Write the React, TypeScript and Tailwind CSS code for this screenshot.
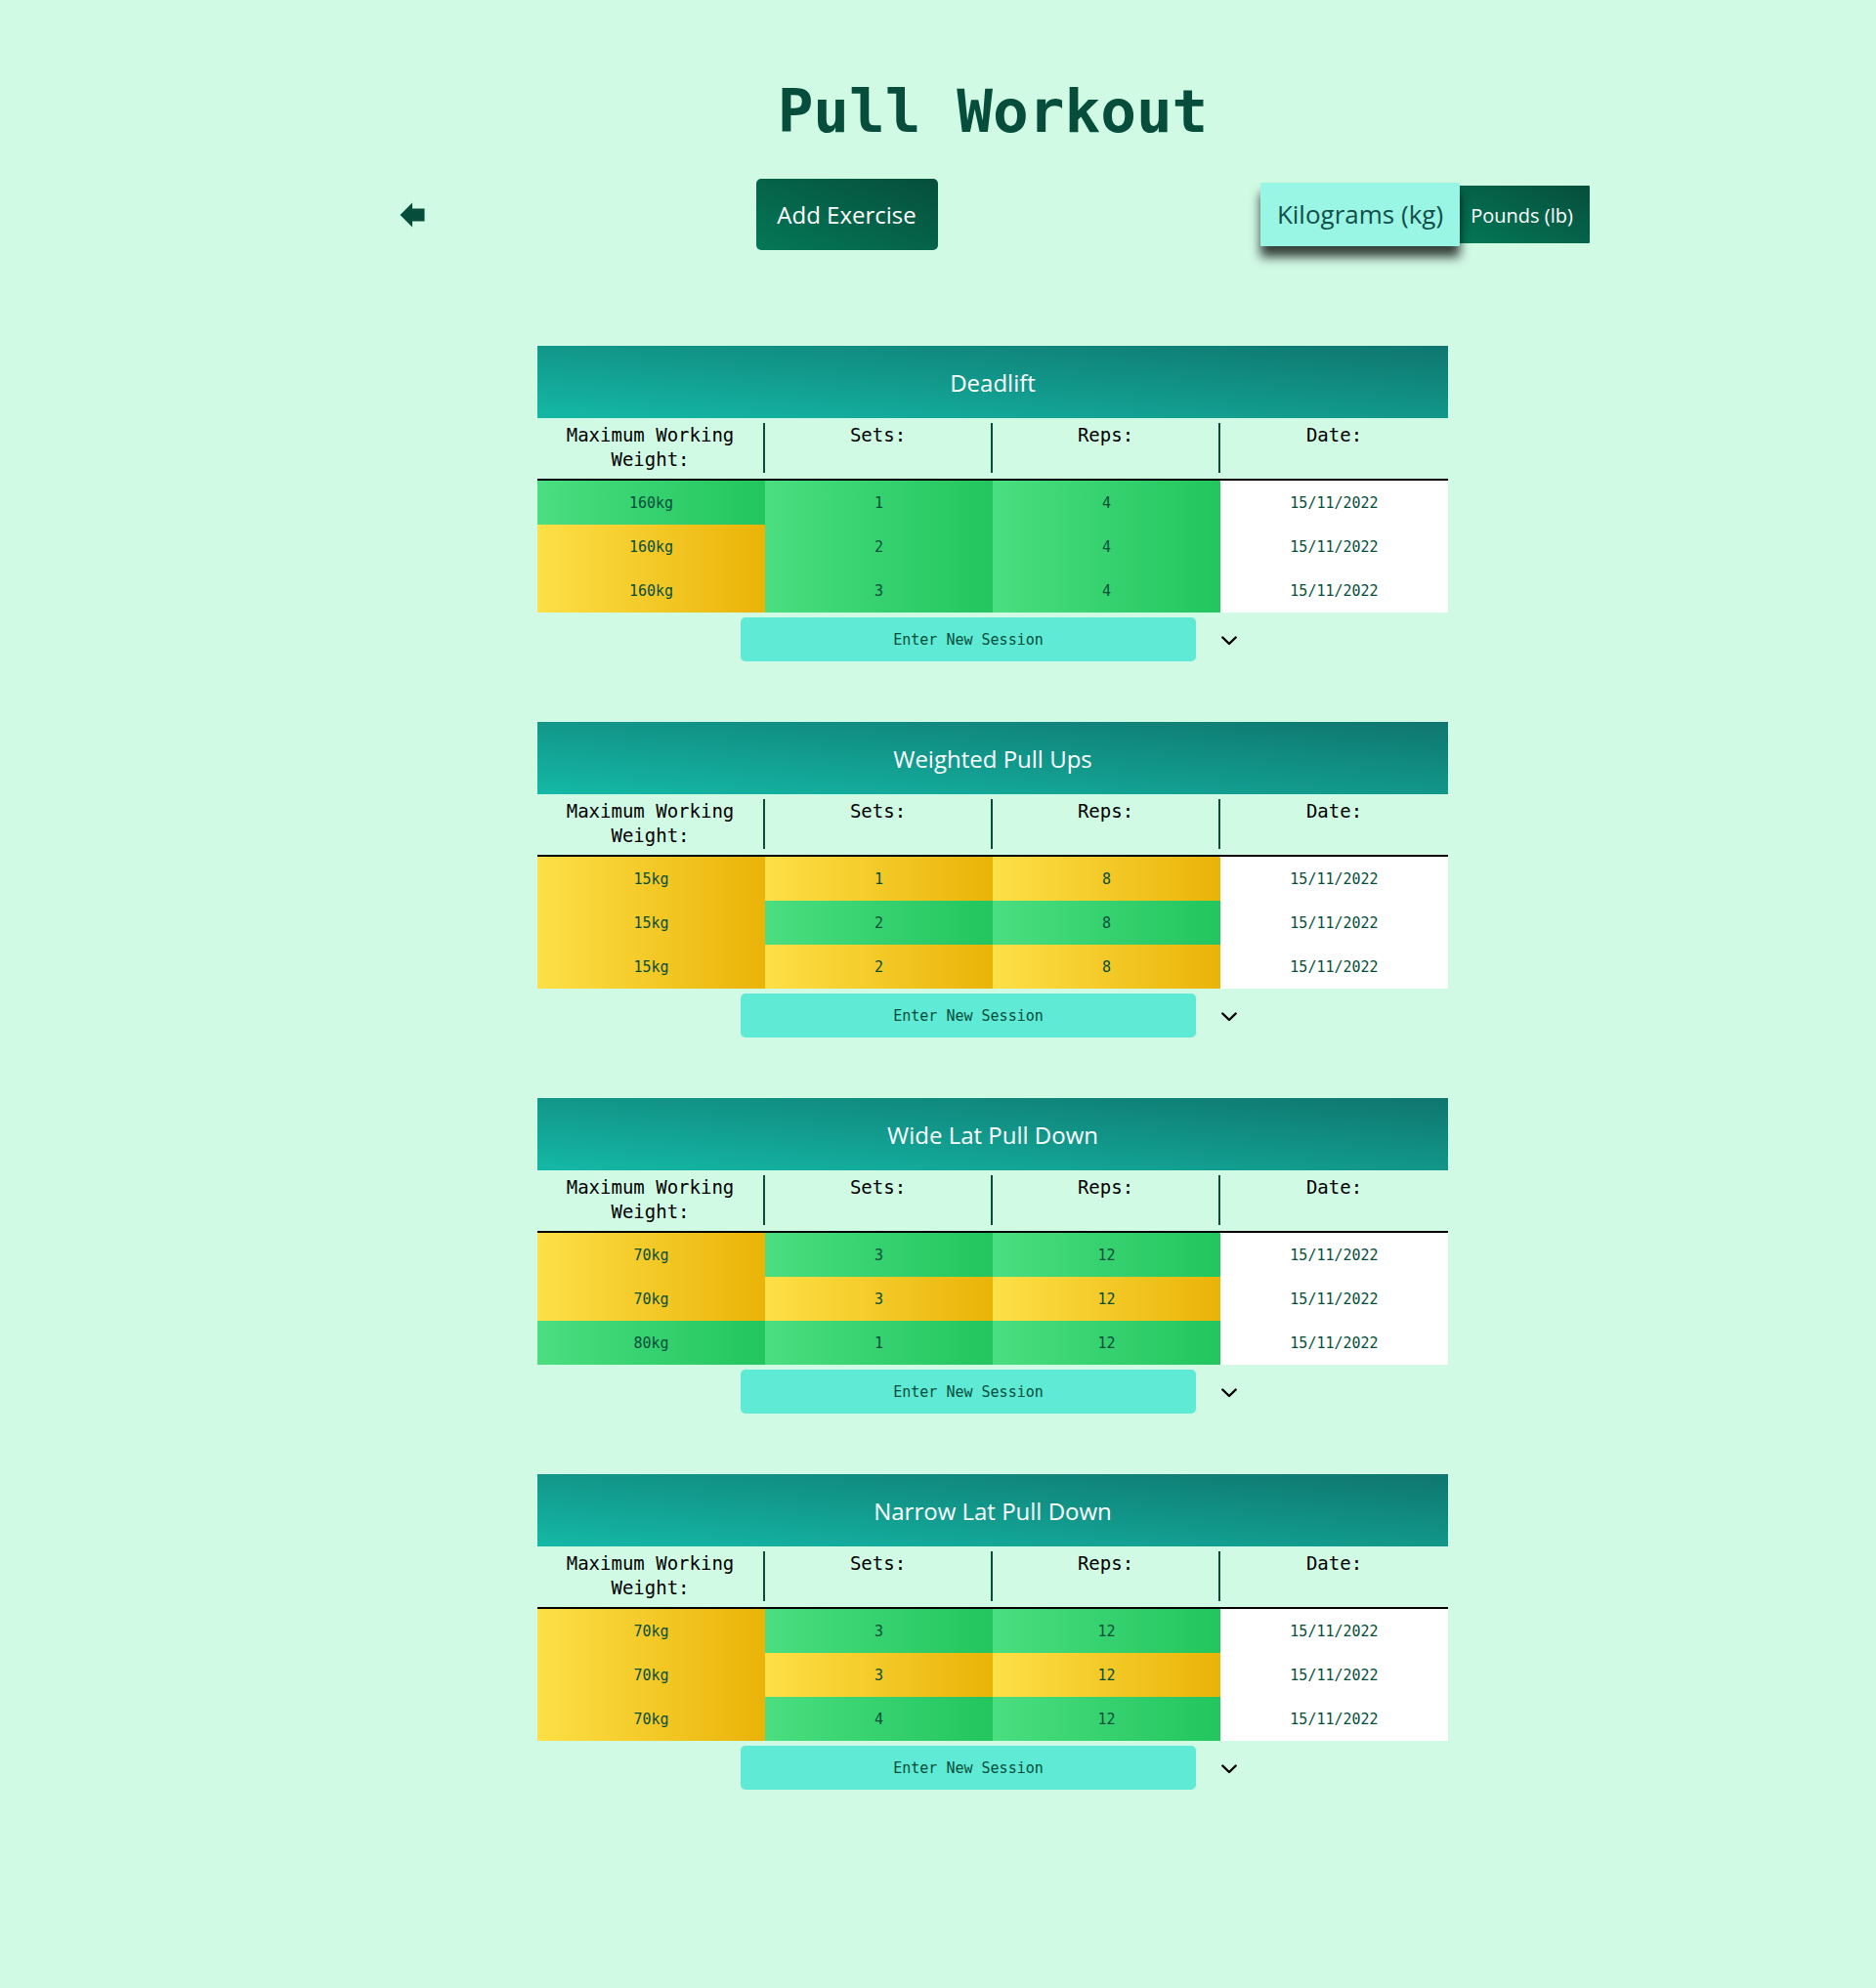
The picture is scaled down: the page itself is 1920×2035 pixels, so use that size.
type Tone = "green" | "yellow";
type Cell = [string, Tone];
type Exercise = { name: string; rows: [Cell, Cell, Cell][] };

const G: Tone = "green";
const Y: Tone = "yellow";
const DATE = "15/11/2022";

const exercises: Exercise[] = [
  {
    name: "Deadlift",
    rows: [
      [["160kg", G], ["1", G], ["4", G]],
      [["160kg", Y], ["2", G], ["4", G]],
      [["160kg", Y], ["3", G], ["4", G]],
    ],
  },
  {
    name: "Weighted Pull Ups",
    rows: [
      [["15kg", Y], ["1", Y], ["8", Y]],
      [["15kg", Y], ["2", G], ["8", G]],
      [["15kg", Y], ["2", Y], ["8", Y]],
    ],
  },
  {
    name: "Wide Lat Pull Down",
    rows: [
      [["70kg", Y], ["3", G], ["12", G]],
      [["70kg", Y], ["3", Y], ["12", Y]],
      [["80kg", G], ["1", G], ["12", G]],
    ],
  },
  {
    name: "Narrow Lat Pull Down",
    rows: [
      [["70kg", Y], ["3", G], ["12", G]],
      [["70kg", Y], ["3", Y], ["12", Y]],
      [["70kg", Y], ["4", G], ["12", G]],
    ],
  },
];

const columns = ["Maximum Working Weight:", "Sets:", "Reps:", "Date:"];

const tones: Record<Tone, string> = {
  green: "bg-linear-to-r/srgb from-[#4ade80] to-[#22c55e]",
  yellow: "bg-linear-to-r/srgb from-[#fde047] to-[#eab308]",
};

const sans = "font-['Open_Sans','Noto_Sans',sans-serif]";
const darkGradient = "bg-linear-to-tr/srgb from-[#047857] to-[#064e3b]";

function ExerciseCard({ exercise }: { exercise: Exercise }) {
  return (
    <section className="flex w-full flex-col items-center">
      <table className="w-full table-fixed border-separate border-spacing-0 text-center">
        <caption
          className={`${sans} h-[74px] bg-linear-to-tr/srgb from-[#14b8a6] to-[#0f766e] text-2xl leading-[76px] text-white`}
        >
          {exercise.name}
        </caption>
        <thead>
          <tr>
            {columns.map((label, i) => (
              <th
                key={label}
                scope="col"
                className="border-b-2 border-black px-0 pt-[5px] pb-1.5 align-top text-[19px] leading-[25px] font-normal text-black"
              >
                <div
                  className={`h-[51px] px-3 ${i < 3 ? "border-r-2 border-[#064e3b]" : ""}`}
                >
                  {label}
                </div>
              </th>
            ))}
          </tr>
        </thead>
        <tbody className="text-[15px]">
          {exercise.rows.map((row, r) => (
            <tr key={r}>
              {row.map(([value, tone], c) => (
                <td key={c} className={`h-[45px] px-0 pt-0.5 pb-0 ${tones[tone]}`}>
                  {value}
                </td>
              ))}
              <td className="h-[45px] bg-white px-0 pt-0.5 pb-0">{DATE}</td>
            </tr>
          ))}
        </tbody>
      </table>
      <div className="mt-[5px] flex w-full items-center justify-center gap-[18px]">
        <button
          type="button"
          className="h-[45px] w-1/2 rounded-[5px] bg-[#5eead4] pt-0.5 text-[15px]"
        >
          Enter New Session
        </button>
        <button
          type="button"
          aria-label={`Show more ${exercise.name} sessions`}
          className="flex size-8 items-center justify-center pt-0.5 text-black"
        >
          <svg viewBox="0 0 16 10" className="h-2.5 w-4" fill="none" stroke="currentColor" strokeWidth="2.4" strokeLinecap="round" strokeLinejoin="round" aria-hidden="true">
            <path d="M1.3 1.5 8 8 14.700 1.5" />
          </svg>
        </button>
      </div>
    </section>
  );
}

export default function App() {
  return (
    <div className="min-h-screen bg-[#d1fae5] pl-28 font-['DejaVu_Sans_Mono','Liberation_Mono',monospace] text-[#064e3b]">
      <main className="mx-auto flex max-w-[1222px] flex-col items-center pt-[76px] pb-[200px]">
        <h1 className="text-[61px] leading-[76px] font-bold">Pull Workout</h1>
        <div className="mt-[31px] flex w-full items-center justify-between">
          <a href="#workouts" aria-label="Back to workouts" className="flex h-[34px] w-[38px] items-center pl-1">
            <svg viewBox="0 0 26 26" className="size-[26px]" fill="currentColor" aria-hidden="true">
              <path d="M0.500 13 13 0.500V6.500H25.500V19.500H13V25.500Z" />
            </svg>
          </a>
          <button
            type="button"
            className={`${sans} ${darkGradient} h-[73px] w-[186px] rounded-[5px] text-2xl text-white`}
          >
            Add Exercise
          </button>
          <div className={`${sans} flex items-center`}>
            <button
              type="button"
              aria-pressed="true"
              className="z-10 h-[65px] w-[204px] rounded-[1px] bg-[#99f6e4] text-[26px] text-[#134e4a] shadow-[0_11px_11px_rgba(0,0,0,0.75)]"
            >
              Kilograms (kg)
            </button>
            <button
              type="button"
              aria-pressed="false"
              className={`${darkGradient} h-[59px] w-[133px] rounded-r-[1px] pt-0.5 pr-1.5 text-xl text-white`}
            >
              Pounds (lb)
            </button>
          </div>
        </div>
        <div className="mt-[98px] flex w-full max-w-[932px] flex-col gap-[62px]">
          {exercises.map((exercise) => (
            <ExerciseCard key={exercise.name} exercise={exercise} />
          ))}
        </div>
      </main>
    </div>
  );
}
